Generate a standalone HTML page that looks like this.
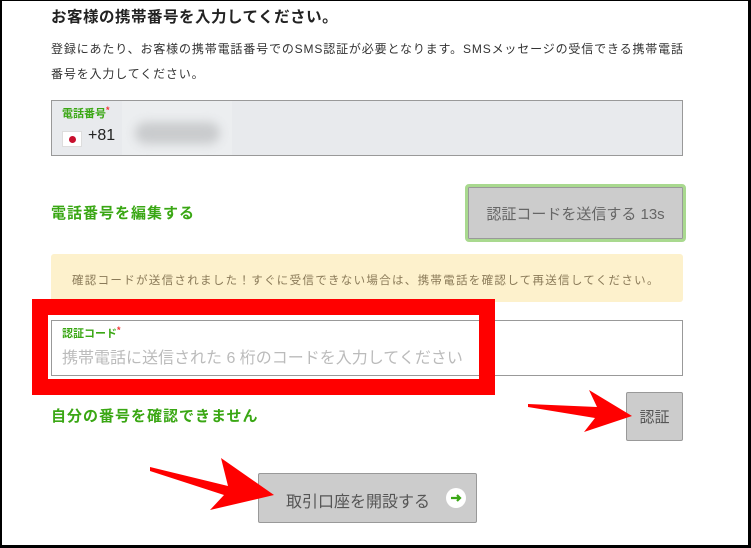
<!DOCTYPE html>
<html><head><meta charset="utf-8"><style>
*{margin:0;padding:0;box-sizing:border-box}
body{width:751px;height:548px;background:#fff;position:relative;overflow:hidden;font-family:"Liberation Sans","Noto Sans CJK JP",sans-serif;color:#333}
.a{position:absolute;white-space:nowrap}
.frame{position:absolute;left:0;top:0;width:751px;height:548px;border-left:2px solid #000;border-right:3px solid #000;border-bottom:3px solid #000;border-top:1px solid #000;pointer-events:none}
.green{color:#3aa714;font-weight:bold}
</style></head><body>
<div class="a" style="left:51px;top:5px;font-size:15.5px;font-weight:bold;color:#222;letter-spacing:0.5px">お客様の携帯番号を入力してください。</div>
<div class="a" style="left:51px;top:40px;font-size:12px;color:#333;letter-spacing:0.85px">登録にあたり、お客様の携帯電話番号でのSMS認証が必要となります。SMSメッセージの受信できる携帯電話</div>
<div class="a" style="left:51px;top:65px;font-size:12px;color:#333;letter-spacing:0.85px">番号を入力してください。</div>

<div class="a" style="left:51px;top:100px;width:632px;height:56px;background:#e8eaed;border:1px solid #999"></div>
<div class="a green" style="left:62px;top:105px;font-size:11px">電話番号<span style="color:#e33;font-size:9px;vertical-align:top">*</span></div>
<div class="a" style="left:62px;top:131px;width:20px;height:16px;background:#fff;border:1px solid #ddd"><div style="position:absolute;left:6px;top:4px;width:7px;height:7px;border-radius:50%;background:#c8102e"></div></div>
<div class="a" style="left:88px;top:127px;font-size:16px;color:#222">+81</div>
<div class="a" style="left:122px;top:101px;width:110px;height:54px;background:#eceef0"></div>
<div class="a" style="left:135px;top:122px;width:85px;height:22px;background:#c9cbcd;border-radius:12px;filter:blur(5px)"></div>

<div class="a green" style="left:51px;top:202px;font-size:15px;letter-spacing:1px">電話番号を編集する</div>
<div class="a" style="left:465px;top:184px;width:221px;height:58px;border:3px solid #a9d98f;border-radius:4px;background:#ccc;box-shadow:inset 0 0 0 1px #999"></div>
<div class="a" style="left:466px;top:203px;width:219px;text-align:center;font-size:15px;color:#666">認証コードを送信する 13s</div>

<div class="a" style="left:51px;top:254px;width:632px;height:48px;background:#fdf1cc;border-radius:3px"></div>
<div class="a" style="left:72px;top:272px;font-size:11.5px;color:#8a7a58;letter-spacing:1.3px">確認コードが送信されました！すぐに受信できない場合は、携帯電話を確認して再送信してください。</div>

<div class="a" style="left:51px;top:320px;width:632px;height:56px;border:1px solid #999;background:#fff"></div>
<div class="a" style="left:32px;top:299px;width:463px;height:96px;border:16px solid #f00"></div>
<div class="a" style="left:51px;top:320px;width:416px;height:56px;border:1px solid #999;border-right:none;background:#fff"></div>
<div class="a green" style="left:62px;top:325px;font-size:11px">認証コード<span style="color:#e33;font-size:9px;vertical-align:top">*</span></div>
<div class="a" style="left:62px;top:344px;font-size:16px;color:#bbb">携帯電話に送信された 6 桁のコードを入力してください</div>

<div class="a green" style="left:51px;top:405px;font-size:15px;letter-spacing:1px">自分の番号を確認できません</div>
<div class="a" style="left:626px;top:392px;width:57px;height:49px;background:#ccc;border:1px solid #999;border-radius:2px"></div>
<div class="a" style="left:626px;top:406px;width:57px;text-align:center;font-size:15px;color:#555">認証</div>

<div class="a" style="left:258px;top:473px;width:219px;height:50px;background:#ccc;border:1px solid #999;border-radius:2px"></div>
<div class="a" style="left:286px;top:488px;font-size:16px;color:#555">取引口座を開設する</div>
<div class="a" style="left:446px;top:488px;width:20px;height:20px;border-radius:50%;background:#fff"></div>
<svg class="a" style="left:446px;top:488px" width="20" height="20"><path d="M5 10h9M11 7l3 3-3 3" stroke="#3aa714" stroke-width="2.2" fill="none"/></svg>

<svg class="a" style="left:0;top:0" width="751" height="548">
<polygon points="528,404 597,407 589,390 632,416 584,432 595,418 528,407" fill="#f00"/>
<polygon points="150,467 228,486 221,458 274,495 210,510 224,495 150,471" fill="#f00"/>
</svg>
<div class="frame"></div>
</body></html>
